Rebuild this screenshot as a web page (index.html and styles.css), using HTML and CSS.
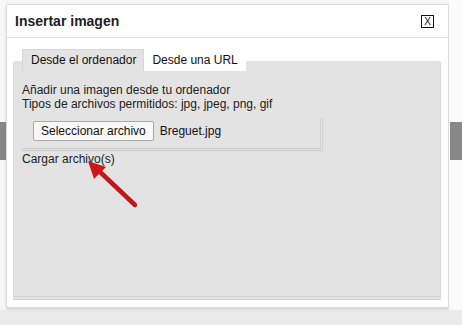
FILE: index.html
```html
<!DOCTYPE html>
<html>
<head>
<meta charset="utf-8">
<title>Insertar imagen</title>
<link rel="stylesheet" href="styles.css">
</head>
<body>

<div class="page">
	<div class="side left"><div class="bar"></div></div>

	<div class="dialog">
		<div class="titlebar">
			<span class="title">Insertar imagen</span>
			<span class="close">X</span>
		</div>

		<div class="dlg-body">
			<ul class="tabs">
				<li class="active">Desde el ordenador</li>
				<li>Desde una URL</li>
			</ul>
			<div class="panel">
				<p class="info">Añadir una imagen desde tu ordenador<br>
				Tipos de archivos permitidos: jpg, jpeg, png, gif</p>

				<div class="filebox">
					<span class="filebtn">Seleccionar archivo</span>
					<span class="filename">Breguet.jpg</span>
				</div>
				<div class="upload">Cargar archivo(s)</div>

				<!-- flecha roja -->
				<svg class="arrow" width="60" height="56" viewBox="0 0 60 56">
					<line x1="15" y1="14" x2="52" y2="49" stroke="#c3161c" stroke-width="4.5" stroke-linecap="round"/>
					<polygon points="5,5 11,23 23,11" fill="#d0141b"/>
				</svg>
			</div>
		</div>
	</div>

	<div class="side right"><div class="bar"></div></div>
</div>

</body>
</html>
```
FILE: styles.css
```css
* {
font-family: "Liberation Sans", Arial, sans-serif;
box-sizing: border-box;
}
body {
margin: 0;
background: #ececec;
width: 462px;
height: 325px;
overflow: hidden;
}
.page {
display: flex;
background: linear-gradient(#f6f6f6, #f1f1f1 300px, #ebebeb 308px);
height: 325px;
}
.side {
padding-top: 122px;
}
.side.left { width: 6px; background: #f7f7f7; height: 310px; }
.side.right { width: 13px; background: #fbfbfb; height: 310px; }
.side .bar {
height: 38px;
background: #888;
}
.side.right .bar { margin-left: 1px; }

.dialog {
width: 443px;
height: 304px;
margin-top: 4px;
background: #fff;
border: 1px solid #dcdcdc;
border-radius: 2px;
box-shadow: 0 1px 3px rgba(0,0,0,0.12);
display: flex;
flex-direction: column;
}
.titlebar {
height: 33px;
display: flex;
align-items: center;
justify-content: space-between;
padding: 0 14px 0 8px;
border-bottom: 1px solid #dedede;
}
.title {
font-size: 14px;
font-weight: bold;
color: #222;
}
.close {
width: 13px;
height: 13px;
border: 1px solid #111;
font-size: 10px;
line-height: 11px;
text-align: center;
color: #111;
margin-top: 1px;
}

.dlg-body {
flex: 1;
padding: 11px 7px 7px 6px;
display: flex;
flex-direction: column;
}
.tabs {
list-style: none;
margin: 0 0 -10px 9px;
padding: 0;
display: flex;
position: relative;
z-index: 1;
}
.tabs li {
height: 22px;
line-height: 22px;
font-size: 12px;
color: #111;
padding: 0 8px 0 8px;
background: #fff;
}
.tabs li.active {
background: #e3e3e3;
border: 1px solid #d6d6d6;
border-bottom: none;
line-height: 20px;
padding-right: 7px;
}
.panel {
flex: 1;
position: relative;
background: #e3e3e3;
border-radius: 3px 3px 0 0;
border-left: 1px solid #dadada;
border-right: 1px solid #d9d9d9;
border-bottom: 4px double #d2d2d2;
padding: 22px 9px 0 8px;
font-size: 12px;
color: #222;
}
.info {
margin: 0;
line-height: 14px;
}
.filebox {
width: 301px;
margin-top: 7px;
padding: 3px 0 7px 11px;
border-right: 3px double #d2d2d2;
border-bottom: 3px double #cbcbcb;
display: flex;
align-items: center;
}
.filebtn {
height: 20px;
line-height: 18px;
padding: 0 7px;
background: #f7f7f7;
border: 1px solid #a9a9a9;
border-radius: 2px;
color: #111;
font-size: 12px;
}
.filename {
margin-left: 6px;
font-size: 12px;
color: #111;
}
.upload {
line-height: 14px;
margin-top: 1px;
color: #222;
}
.arrow {
position: absolute;
left: 69px;
top: 95px;
}
```
